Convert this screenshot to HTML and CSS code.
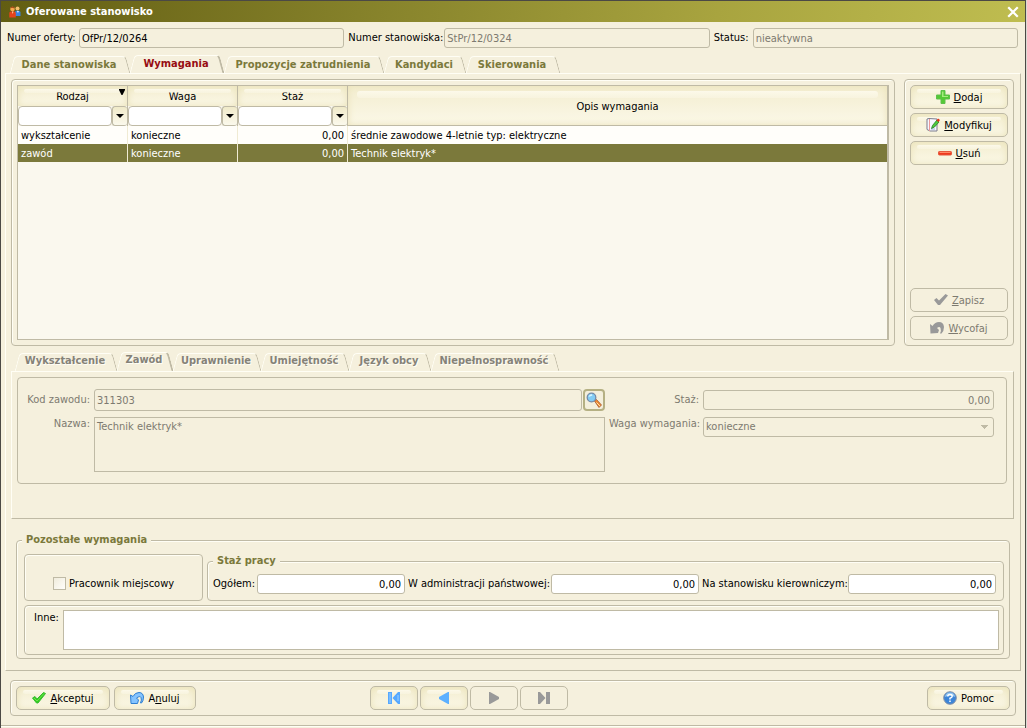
FILE: index.html
```html
<!DOCTYPE html>
<html lang="pl">
<head>
<meta charset="utf-8">
<title>Oferowane stanowisko</title>
<link rel="stylesheet" href="styles.css">
</head>
<body>
<div class="window">
  <header class="titlebar">
    <svg class="icon-app" width="12" height="12" viewBox="0 0 12 12" aria-hidden="true">
      <circle cx="8.500" cy="2.500" r="2" fill="#f4bf6d"/><path d="M6 10V6q0-1.500 2.500-1.500T11.500 6v4z" fill="#3b84e0"/><path d="M8 5l1 2 .8-2z" fill="#fff"/>
      <circle cx="3.500" cy="3" r="2.300" fill="#f9a94e"/><path d="M1.300 2.600q.2-2.200 2.200-2.200t2.200 2L3 1.800z" fill="#a9481a"/><path d="M.3 11.500V7q0-1.700 3.200-1.700T6.800 7v4.500z" fill="#e5431d"/><path d="M3 5.500l.7 2.500.8-2.500z" fill="#ffe4b0"/>
    </svg>
    <h1>Oferowane stanowisko</h1>
    <button class="close" type="button" aria-label="Zamknij"><svg width="12" height="12" viewBox="0 0 12 12"><path d="M2 2l8 8M10 2l-8 8" stroke="#fff" stroke-width="2.200" stroke-linecap="square"/></svg></button>
  </header>

  <div class="header-fields">
    <label for="oferta">Numer oferty:</label><input class="field" id="oferta" value="OfPr/12/0264" readonly>
    <label for="stan">Numer stanowiska:</label><input class="field" id="stan" value="StPr/12/0324" disabled>
    <label for="status">Status:</label><input class="field" id="status" value="nieaktywna" disabled>
  </div>

  <nav class="tabs main-tabs">
    <button class="tab w-120" type="button">Dane stanowiska</button>
    <button class="tab w-94 active" type="button">Wymagania</button>
    <button class="tab w-160" type="button">Propozycje zatrudnienia</button>
    <button class="tab w-82" type="button">Kandydaci</button>
    <button class="tab w-94" type="button">Skierowania</button>
  </nav>

  <main class="page main-page">
    <div class="upper">
      <section class="box table-box">
        <div class="table-area">
          <table>
            <colgroup><col class="narrow"><col class="narrow"><col class="narrow"><col></colgroup>
            <thead>
              <tr><th class="glossy">Rodzaj<svg class="sort" width="6" height="6" viewBox="0 0 6 6"><path d="M0 0h6v1L3.500 6h-1L0 1z"/></svg></th><th class="glossy">Waga</th><th class="glossy">Staż</th><th class="glossy" rowspan="2">Opis wymagania</th></tr>
              <tr>
                <th class="filter"><div class="combo"><input aria-label="Filtr rodzaju"><button type="button" aria-label="Wybierz rodzaj"><svg width="8" height="4" viewBox="0 0 8 4"><path d="M0 0h8L4 4z"/></svg></button></div></th>
                <th class="filter"><div class="combo"><input aria-label="Filtr wagi"><button type="button" aria-label="Wybierz wagę"><svg width="8" height="4" viewBox="0 0 8 4"><path d="M0 0h8L4 4z"/></svg></button></div></th>
                <th class="filter"><div class="combo"><input aria-label="Filtr stażu"><button type="button" aria-label="Wybierz staż"><svg width="8" height="4" viewBox="0 0 8 4"><path d="M0 0h8L4 4z"/></svg></button></div></th>
              </tr>
            </thead>
            <tbody>
              <tr><td>wykształcenie</td><td>konieczne</td><td class="num">0,00</td><td>średnie zawodowe 4-letnie typ: elektryczne</td></tr>
              <tr class="selected"><td>zawód</td><td>konieczne</td><td class="num">0,00</td><td>Technik elektryk*</td></tr>
            </tbody>
          </table>
        </div>
      </section>
      <aside class="box actions">
        <button class="btn" type="button"><svg width="14" height="14" viewBox="0 0 14 14"><path d="M5 .5h4V5h4.500v4H9v4.500H5V9H.5V5H5z" fill="#55c936" stroke="#5fc04c"/><path d="M6 1.500h1.500V6H12v1H6z" fill="#a5ec7f"/></svg><span><u>D</u>odaj</span></button>
        <button class="btn" type="button"><svg width="14" height="14" viewBox="0 0 14 14"><path d="M1 1l2-.5L11 1v12H4l-3-1.500z" fill="#f6f7ff" stroke="#7c7d8c"/><path d="M3.500 1v12" stroke="#e99" /><path d="M5 11h4" stroke="#9ab0dd"/><path d="M5.500 10.500l1-3L11 2l2 2-4.500 5z" fill="#4cc93b" stroke="#237f27" stroke-width=".8"/><path d="M10.500 2.500L12 .5l2 1.500-1.500 2z" fill="#e33118"/></svg><span><u>M</u>odyfikuj</span></button>
        <button class="btn" type="button"><svg width="14" height="14" viewBox="0 0 14 14"><rect x=".5" y="5.500" width="13" height="3.500" rx=".8" fill="#f0391d" stroke="#e5593f"/><path d="M1.500 6.500h11" stroke="#ff8b69"/></svg><span><u>U</u>suń</span></button>
        <span class="spacer"></span>
        <button class="btn" type="button" disabled><svg width="14" height="14" viewBox="0 0 14 14"><path d="M0 7l2.500-2L5 7.500 11.500 1 14 2.500 6 12H4z" fill="#999"/></svg><span><u>Z</u>apisz</span></button>
        <button class="btn" type="button" disabled><svg width="14" height="14" viewBox="0 0 14 14"><path d="M0 3l2.500 2Q5 1 9 1q4.500 0 5 5 0 4-2.500 6.500H10q1.500-3 .5-5.500-1-2-3.500 0l2 2-1 3-7.500.5z" fill="#999"/></svg><span><u>W</u>ycofaj</span></button>
      </aside>
    </div>

    <nav class="tabs sub-tabs">
      <button class="tab w-102" type="button">Wykształcenie</button>
      <button class="tab w-56 active" type="button">Zawód</button>
      <button class="tab w-88" type="button">Uprawnienie</button>
      <button class="tab w-88" type="button">Umiejętność</button>
      <button class="tab w-82" type="button">Język obcy</button>
      <button class="tab w-128" type="button">Niepełnosprawność</button>
    </nav>
    <section class="page sub-page">
      <div class="box details">
        <label for="kod">Kod zawodu:</label>
        <div class="lookup"><input class="field" id="kod" value="311303" disabled><button type="button" aria-label="Szukaj"><svg width="16" height="16" viewBox="0 0 16 16"><path d="M8.500 9l2-1.500 5 5.500-2.500 2.500z" fill="#f18a31" stroke="#a25a33" stroke-width=".8"/><path d="M10.500 10.500l3.500 3.500" stroke="#ffe0a5"/><circle cx="5.500" cy="5.500" r="4.300" fill="#83ccf4" stroke="#758aa8" stroke-width="1.300"/><path d="M2.500 5q.5-2.500 3-3l1 1.500q-2 .5-4 1.500z" fill="#d9f5ff"/></svg></button></div>
        <label for="staz">Staż:</label><input class="field num" id="staz" value="0,00" disabled>
        <label for="nazwa">Nazwa:</label><textarea id="nazwa" disabled>Technik elektryk*</textarea>
        <label for="waga">Waga wymagania:</label><select class="field" id="waga" disabled><option>konieczne</option></select>
      </div>
    </section>

    <fieldset class="others">
      <legend>Pozostałe wymagania</legend>
      <div class="others-row">
        <div class="box local"><input type="checkbox" id="local"><label for="local">Pracownik miejscowy</label></div>
        <fieldset class="experience">
          <legend>Staż pracy</legend>
          <div class="experience-fields">
            <label for="og">Ogółem:</label><input class="field num white" id="og" value="0,00">
            <label for="adm">W administracji państwowej:</label><input class="field num white" id="adm" value="0,00">
            <label for="kier">Na stanowisku kierowniczym:</label><input class="field num white" id="kier" value="0,00">
          </div>
        </fieldset>
      </div>
      <div class="box other-text"><label for="inne">Inne:</label><textarea id="inne"></textarea></div>
    </fieldset>
  </main>

  <footer class="box footer">
    <div class="group">
      <button class="btn accept" type="button"><svg width="14" height="14" viewBox="0 0 14 14"><path d="M.5 7l2.500-1.500L5 8l6.500-6.500 2 1L6 12H4.500z" fill="#31ce20" stroke="#3abb32"/><path d="M2 7l3 3 7-7.500" fill="none" stroke="#6fe24e"/></svg><span><u>A</u>kceptuj</span></button>
      <button class="btn cancel" type="button"><svg width="14" height="14" viewBox="0 0 14 14"><path d="M.5 4l2.500 1.500Q5 1.500 9 1.500q4 0 4.500 4.500 0 4-2 6h-1q1.500-3 .5-5.500-1-2-4.500.5l2 2-1 3.500H1z" fill="#85c4ff" stroke="#2f7fd2"/></svg><span>A<u>n</u>uluj</span></button>
    </div>
    <div class="group nav">
      <button class="btn" type="button" aria-label="Pierwszy"><svg width="14" height="14" viewBox="0 0 14 14"><path d="M1 1h4v12H1zM13 1v12h-2L5.500 7 11 1z" fill="#56a8ff"/><path d="M3 2v10M11 4v6" stroke="#9bd0ff"/></svg></button>
      <button class="btn" type="button" aria-label="Poprzedni"><svg width="14" height="14" viewBox="0 0 14 14"><path d="M12 1v12h-1L2 8V6l9-5z" fill="#5cb0ff"/></svg></button>
      <button class="btn" type="button" aria-label="Następny" disabled><svg width="14" height="14" viewBox="0 0 14 14"><path d="M2 1h1l9 5v2l-9 5H2z" fill="#999"/></svg></button>
      <button class="btn" type="button" aria-label="Ostatni" disabled><svg width="14" height="14" viewBox="0 0 14 14"><path d="M1 1h2l5.500 6L3 13H1zM9 1h4v12H9z" fill="#999"/></svg></button>
    </div>
    <div class="group end">
      <button class="btn help" type="button"><svg width="14" height="14" viewBox="0 0 14 14"><circle cx="7" cy="7" r="6.300" fill="#3c85d8" stroke="#8592a8"/><path d="M2 6q.5-4.500 5-4.500T12 6Q7 3.500 2 6z" fill="#96c9f4"/><path d="M4.800 5.500q0-2 2.200-2t2.200 1.700Q9.200 6.500 7 7.200v1.300M7 9.500V11" fill="none" stroke="#fff" stroke-width="1.500"/></svg><span>Pomoc</span></button>
    </div>
  </footer>
  <div class="window-edge"></div>
</div>
</body>
</html>
```
FILE: styles.css
```css
:root {
  --bg: #f5f0dd;
  --line: #bfbaa5;
  --olive: #7b793b;
  --muted: #7d7a70;
}
* { box-sizing: border-box; }
body {
  margin: 0;
  padding-right: 1px;
  background: #dcdad2;
  color: #000;
  font: 11px/14px "DejaVu Sans Condensed", Tahoma, "Noto Sans", sans-serif;
}
button, input, textarea, select { font: inherit; color: inherit; margin: 0; }
svg { display: block; flex: none; }
label { white-space: nowrap; }
.window {
  min-height: 100vh;
  display: flex;
  flex-direction: column;
  border: solid #4b4945;
  border-width: 1px 1px 0;
  background: var(--bg);
}
.titlebar {
  height: 21px;
  display: flex;
  align-items: center;
  gap: 5px;
  padding: 0 6px 0 8px;
  background: linear-gradient(98deg, #625d12, #85812a 35%, #a8a43f 70%, #bfbd50);
}
.titlebar h1 { margin: 0; flex: 1; color: #fff; font-size: 11px; line-height: 14px; }
.close { border: 0; padding: 0; background: none; }

.header-fields {
  display: grid;
  grid-template-columns: 68px 1fr 92px 1fr 35px 1fr;
  column-gap: 4px;
  align-items: center;
  padding: 6px 7px 0 6px;
}
.field {
  width: 100%;
  min-width: 0;
  height: 20px;
  padding: 0 3px 0 2px;
  border: 1px solid var(--line);
  border-radius: 3px;
  background: var(--bg);
}
.field:disabled, textarea:disabled { color: var(--muted); opacity: 1; }
.white { background: #fff; }
.num { text-align: right; }

.tabs { display: flex; align-items: flex-end; }
.main-tabs { height: 25px; padding-left: 9px; }
.sub-tabs { height: 25px; padding-left: 4px; }
.tab {
  position: relative;
  isolation: isolate;
  height: 17px;
  padding: 0 2px 0 0;
  border: 0;
  background: none;
  color: var(--olive);
  font-weight: bold;
  white-space: nowrap;
}
.tab::before, .tab::after {
  content: "";
  position: absolute;
  z-index: -1;
  top: 0;
  bottom: 0;
  border-top: 1px solid #fffef5;
}
.tab::before { left: 2px; right: 50%; border-left: 1px solid #fffef5; border-top-left-radius: 4px; transform: skewX(-15deg); }
.tab::after { left: 50%; right: 2px; border-right: 1px solid var(--line); border-top-right-radius: 4px; transform: skewX(15deg); }
.tab.active { height: 18px; padding-bottom: 1px; color: #970c12; }
.tab.active::after { border-right: 2px solid var(--line); }
.sub-tabs .tab { height: 18px; padding-bottom: 3px; color: #858278; text-shadow: 1px 1px #fffef5; }
.sub-tabs .tab.active { height: 19px; padding-bottom: 4px; }
.w-56 { width: 56px; }
.w-82 { width: 82px; }
.w-88 { width: 88px; }
.w-94 { width: 94px; }
.w-102 { width: 102px; }
.w-120 { width: 120px; }
.w-128 { width: 128px; }
.w-160 { width: 160px; }

.page {
  border: 1px solid var(--line);
  border-top-color: #fffef5;
  border-left-color: #fffef5;
}
.main-page {
  flex: 1;
  display: flex;
  flex-direction: column;
  margin: 0 4px 9px;
  padding: 5px 6px 11px 5px;
}
.box {
  border: 1px solid var(--line);
  border-radius: 4px;
  box-shadow: inset 1px 1px #fffef5;
}
.upper { flex: 1; display: flex; gap: 9px; }
.table-box { flex: 1; display: flex; padding: 5px; }
.table-area {
  flex: 1;
  border: 1px solid var(--line);
  border-right-width: 2px;
  background: #faf8ee;
}
table { width: 100%; table-layout: fixed; border-collapse: separate; border-spacing: 0; }
.narrow { width: 110px; }
th { position: relative; height: 20px; padding: 2px 0 0; font-weight: normal; border-right: 1px solid var(--line); }
th.filter { padding: 0; }
th[rowspan] { border-right: 0; border-bottom: 1px solid var(--line); }
.sort { position: absolute; top: 3px; right: 2px; }
td { height: 18px; padding: 2px 3px 0; background: #fffefa; border-right: 1px solid #f0ebd3; white-space: nowrap; }
td:last-child { border-right: 0; }
.selected td { background: var(--olive); color: #fff; }
.glossy, .btn {
  background: linear-gradient(#f3edcf, #fbf8e8);
  box-shadow: inset 0 0 7px #eae2b8;
}
.glossy::before, .btn:enabled::before {
  content: "";
  position: absolute;
  top: 3px;
  left: 6px;
  right: 6px;
  height: 4px;
  border-radius: 3px;
  background: linear-gradient(#fcf9ea, #fcf9ea66);
}
th[rowspan]::before { top: 5px; left: 9px; right: 9px; height: 7px; }
.combo { display: flex; height: 20px; }
.combo input {
  flex: 1;
  min-width: 0;
  border: 1px solid var(--line);
  border-radius: 4px;
  background: #fff;
}
.combo button {
  display: grid;
  place-items: center;
  width: 15px;
  padding: 0;
  border: 1px solid var(--line);
  border-right: 0;
  border-radius: 3px;
  background: linear-gradient(#f0eac9, #fbf9ec);
}

.actions { width: 110px; display: flex; flex-direction: column; gap: 4px; padding: 5px; }
.spacer { flex: 1; }
.btn {
  position: relative;
  display: flex;
  align-items: center;
  justify-content: center;
  gap: 4px;
  height: 24px;
  padding: 0 4px;
  border: 1px solid var(--line);
  border-radius: 5px;
}
.btn svg, .btn span { position: relative; }
.btn span { padding-top: 2px; }
.btn:disabled { background: var(--bg); box-shadow: none; color: var(--muted); }
.btn u { text-underline-offset: 1px; }

.sub-page { padding: 5px 6px 34px 5px; }
.details {
  display: grid;
  grid-template-columns: 68px minmax(0, 511fr) 90px minmax(0, 291fr);
  column-gap: 4px;
  row-gap: 6px;
  align-items: center;
  padding: 11px 12px 11px 4px;
  color: var(--muted);
  box-shadow: none;
}
.details label { text-align: right; }
.details > label:nth-of-type(n+3) { align-self: start; }
.details select { align-self: start; }
.lookup { display: flex; gap: 1px; }
.lookup .field { height: 22px; }
.lookup button {
  display: grid;
  place-items: center;
  flex: none;
  width: 22px;
  height: 22px;
  padding: 0;
  border: 2px solid #b5b083;
  border-radius: 4px;
  background: #f4efdc;
}
textarea {
  display: block;
  width: 100%;
  resize: none;
  padding: 2px;
  border: 1px solid var(--line);
  border-radius: 0;
  background: var(--bg);
}
.details textarea { height: 55px; }
select.field {
  appearance: none;
  background: linear-gradient(to bottom left, #bfbaa5 50%, transparent 50%) right 8px center / 4px 4px no-repeat,
    linear-gradient(to bottom right, #bfbaa5 50%, transparent 50%) right 4px center / 4px 4px no-repeat;
}

fieldset {
  min-width: 0;
  margin: 0;
  border: 1px solid var(--line);
  border-radius: 4px;
  box-shadow: inset 1px 1px #fffef5;
}
legend { padding: 0 4px; background: var(--bg); color: var(--olive); font-weight: bold; }
.others { margin: 14px 4px 0 5px; padding: 7px 5px 3px 7px; }
.others > legend { margin-left: -2px; }
.others-row { display: flex; gap: 4px; }
.local { width: 179px; display: flex; align-items: center; justify-content: center; gap: 3px; padding-top: 12px; }
.local input {
  appearance: none;
  width: 13px;
  height: 13px;
  border: 1px solid var(--line);
  background: linear-gradient(135deg, #f0ecdc, #fffefa);
}
.experience { flex: 1; padding: 6px 7px 6px 5px; }
.experience-fields {
  display: grid;
  grid-template-columns: 41px 1fr 140px 1fr 143px 1fr;
  column-gap: 3px;
  align-items: center;
}
.other-text { display: flex; gap: 4px; margin-top: 4px; padding: 4px 4px 4px 9px; }
.other-text label { padding-top: 1px; }
.other-text textarea { flex: 1; height: 40px; background: #fff; }

.footer {
  display: grid;
  grid-template-columns: 4fr auto 5fr;
  margin: 0 9px;
  padding: 5px;
}
.group { display: flex; gap: 4px; }
.nav { gap: 2px; }
.nav .btn { width: 48px; }
.end { justify-content: flex-end; }
.accept { width: 94px; }
.cancel { width: 82px; }
.help { width: 83px; }
.window-edge { height: 3px; margin-top: 9px; border-top: 1px solid var(--line); box-shadow: inset 0 1px #fffef5; }
```
